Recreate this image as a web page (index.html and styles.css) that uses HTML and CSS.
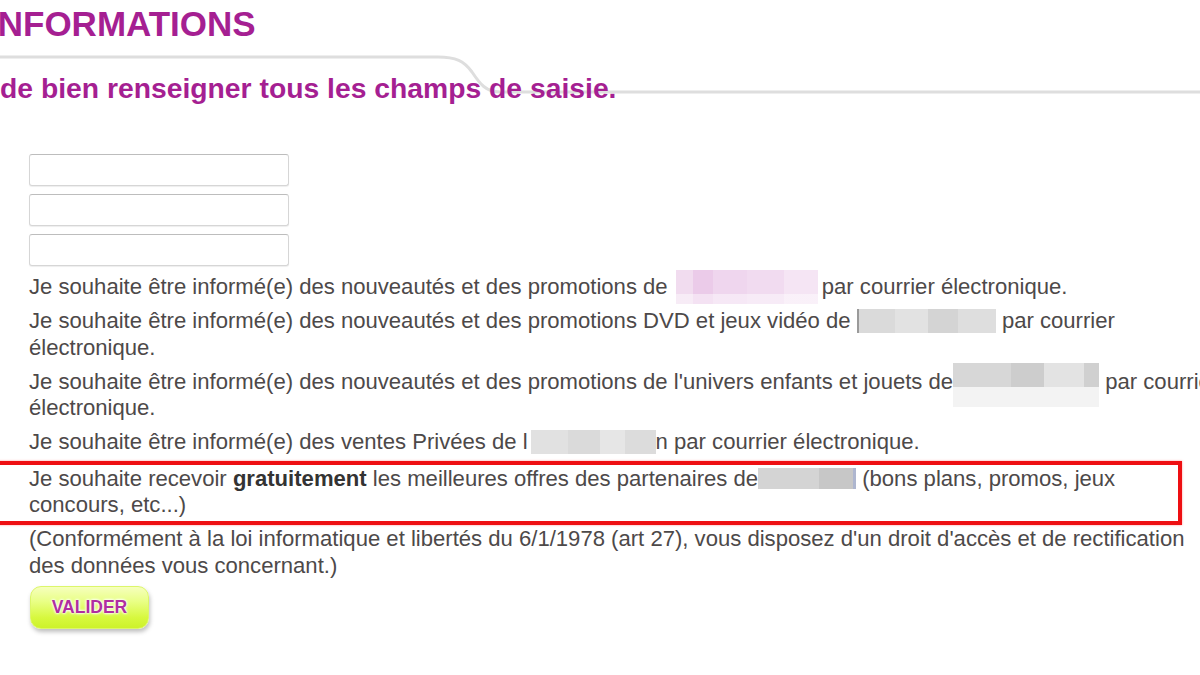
FILE: index.html
```html
<!DOCTYPE html>
<html lang="fr">
<head>
<meta charset="utf-8">
<title>Informations</title>
<link rel="stylesheet" href="styles.css">
</head>
<body>
<div class="page">
  <svg class="tab-line" width="1200" height="110" viewBox="0 0 1200 110" aria-hidden="true">
    <path d="M-10 57 H438 C456 57 464 61 472 72 C480 84 486 92 500 92 H1210" fill="none" stroke="#dedede" stroke-width="3"/>
  </svg>
  <h1 class="title">INFORMATIONS</h1>
  <h2 class="subtitle">de bien renseigner tous les champs de saisie.</h2>

  <form class="form">
    <div class="fields">
      <input class="field" type="text">
      <input class="field" type="text">
      <input class="field" type="text">
    </div>

    <p class="opt">Je souhaite être informé(e) des nouveautés et des promotions de <span class="blur blur-pink"></span>par courrier électronique.</p>
    <p class="opt">Je souhaite être informé(e) des nouveautés et des promotions DVD et jeux vidéo de <span class="blur blur-gray blur-bar"></span> par courrier<br>électronique.</p>
    <p class="opt">Je souhaite être informé(e) des nouveautés et des promotions de l'univers enfants et jouets de<span class="blur blur-gray blur-tall"></span> par courrier<br>électronique.</p>
    <p class="opt">Je souhaite être informé(e) des ventes Privées de l<span class="blur blur-gray blur-short"></span>n par courrier électronique.</p>
    <p class="opt opt-highlight">Je souhaite recevoir <b>gratuitement</b> les meilleures offres des partenaires de<span class="blur blur-gray blur-small"></span> (bons plans, promos, jeux<br>concours, etc...)</p>
    <p class="opt">(Conformément à la loi informatique et libertés du 6/1/1978 (art 27), vous disposez d'un droit d'accès et de rectification<br>des données vous concernant.)</p>

    <button class="btn" type="button">VALIDER</button>
  </form>
</div>
</body>
</html>
```
FILE: styles.css
```css
html, body {
  margin: 0;
  padding: 0;
  background: #ffffff;
}

body {
  width: 1200px;
  height: 675px;
  overflow: hidden;
  font-family: "Liberation Sans", Arial, sans-serif;
}

.page {
  position: relative;
  box-sizing: border-box;
  width: 1200px;
  height: 675px;
  padding-top: 7px;
}

.tab-line {
  position: absolute;
  left: 0;
  top: 0;
  z-index: 0;
}

.title {
  position: relative;
  z-index: 1;
  margin: 0 0 0 -12px;
  font-size: 35px;
  line-height: 34px;
  font-weight: bold;
  color: #a51f92;
  white-space: nowrap;
}

.subtitle {
  position: relative;
  z-index: 1;
  margin: 33px 0 0 0;
  font-size: 28.3px;
  line-height: 28px;
  font-weight: bold;
  color: #a51f92;
  white-space: nowrap;
}

.form {
  position: relative;
  z-index: 1;
  margin: 52px 0 0 29px;
  width: 1240px;
}

.fields {
  display: flex;
  flex-direction: column;
  gap: 8px;
}

.field {
  box-sizing: border-box;
  width: 260px;
  height: 32px;
  margin: 0;
  border: 1px solid #d6d6d6;
  border-top-color: #bdbdbd;
  border-radius: 3px;
  background: #ffffff;
  box-shadow: 0 1px 1px #eeeeee;
}

.opt {
  margin: 7.5px 0 0 0;
  font-size: 22.1px;
  line-height: 26.5px;
  color: #4d4949;
  white-space: nowrap;
}

.fields + .opt {
  margin-top: 8px;
}

.opt b {
  color: #333333;
}

.opt-highlight {
  position: relative;
  margin-top: 10px;
}

.opt-highlight::after {
  content: "";
  position: absolute;
  box-sizing: border-box;
  left: -60px;
  top: -5px;
  bottom: -6px;
  width: 1213px;
  border: 4px solid #ee0f12;
  box-shadow: 0 0 2px rgba(255, 80, 80, 0.6);
  pointer-events: none;
}

.blur {
  display: inline-block;
  vertical-align: middle;
  height: 24px;
  margin: -6px 0 -4px 0;
}

.blur-pink {
  width: 142px;
  height: 34px;
  margin: -10px 4px -8px 2px;
  background:
    linear-gradient(180deg, rgba(255,255,255,0) 0 70%, rgba(255,255,255,0.45) 70% 100%),
    linear-gradient(90deg, #f1dcef 0 12%, #ebcbe9 12% 26%, #efd6ee 26% 50%, #f1dbf0 50% 76%, #f5e5f4 76% 100%);
}

.blur-gray {
  background: linear-gradient(90deg, #dadada 0 26%, #e2e2e2 26% 50%, #d4d4d4 50% 72%, #dedede 72% 100%);
}

.blur-bar {
  width: 137px;
  border-left: 2px solid #9a9a9a;
}

.blur-tall {
  width: 146px;
  height: 44px;
  margin: -6px 0 -24px 0;
  vertical-align: top;
  background:
    linear-gradient(180deg, rgba(255,255,255,0) 0 54%, #ffffff 54% 100%),
    linear-gradient(90deg, #d7d7d7 0 40%, #cdcdcd 40% 62%, #e3e3e3 62% 90%, #d0d0d0 90% 100%);
  box-shadow: inset 0 -20px 0 #f3f3f3;
}

.blur-short {
  width: 125px;
  margin-left: 3px;
  background: linear-gradient(90deg, #e1e1e1 0 30%, #dadada 30% 55%, #e6e6e6 55% 75%, #dcdcdc 75% 100%);
}

.blur-small {
  width: 98px;
  height: 21px;
  margin: -4px 0 -2px 0;
  background: linear-gradient(90deg, #d4d4d4 0 62%, #c7c7c7 62% 97%, #aeb6cf 97% 100%);
}

.btn {
  display: block;
  box-sizing: border-box;
  margin: 7px 0 0 1px;
  width: 119px;
  height: 43px;
  padding: 0;
  border: 1px solid #dcf66a;
  border-radius: 11px;
  background: linear-gradient(180deg, #f6ffbd 0%, #e9ff86 35%, #d7f83e 75%, #cdf22a 100%);
  box-shadow: 1px 3px 4px rgba(0, 0, 0, 0.25);
  font-family: "Liberation Sans", Arial, sans-serif;
  font-size: 17.5px;
  font-weight: bold;
  color: #b02ea0;
  text-shadow: 0 0 3px #ffffff, 0 0 3px #ffffff, 0 0 2px #ffffff;
  letter-spacing: 0;
  cursor: pointer;
}
```
